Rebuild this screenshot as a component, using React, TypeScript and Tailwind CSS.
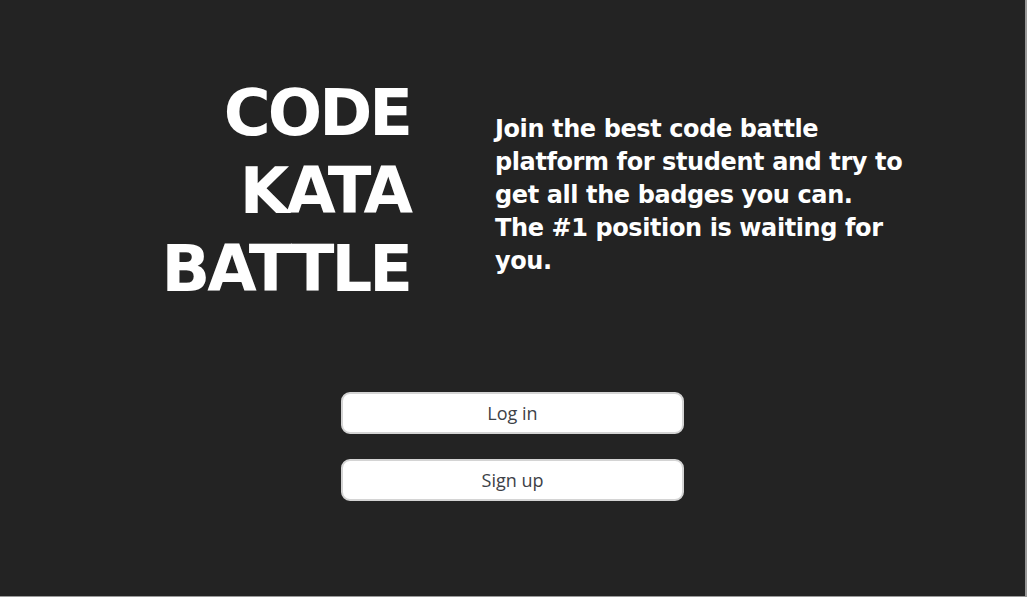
const App = () => {
    return (
        <div className="h-[597px] w-full bg-[#232323] border-r-2 border-b border-[#9a9a9a] overflow-hidden">
            <div className="flex items-start pt-[74px]">
                <h1 className="w-[300px] ml-[110px] text-right font-['DejaVu_Sans',sans-serif] font-bold text-[64px] leading-[78px] tracking-[-3px] text-white whitespace-nowrap">
                    CODE
                    <br />
                    KATA
                    <br />
                    BATTLE
                </h1>
                <p className="ml-[85px] mt-[39px] font-['DejaVu_Sans',sans-serif] font-bold text-[24px] leading-[33px] tracking-[-0.4px] text-white whitespace-nowrap">
                    Join the best code battle
                    <br />
                    platform for student and try to
                    <br />
                    get all the badges you can.
                    <br />
                    The #1 position is waiting for
                    <br />
                    you.
                </p>
            </div>
            <div className="flex flex-col items-center gap-[25px] mt-[84px]">
                <button className="w-[343px] h-[42px] bg-white border-2 border-[#d4d4d4] rounded-[9px] font-['Open_Sans',sans-serif] text-[18px] text-[#3d4147]">
                    Log in
                </button>
                <button className="w-[343px] h-[42px] bg-white border-2 border-[#d4d4d4] rounded-[9px] font-['Open_Sans',sans-serif] text-[18px] text-[#3d4147]">
                    Sign up
                </button>
            </div>
        </div>
    );
};

export default App;
